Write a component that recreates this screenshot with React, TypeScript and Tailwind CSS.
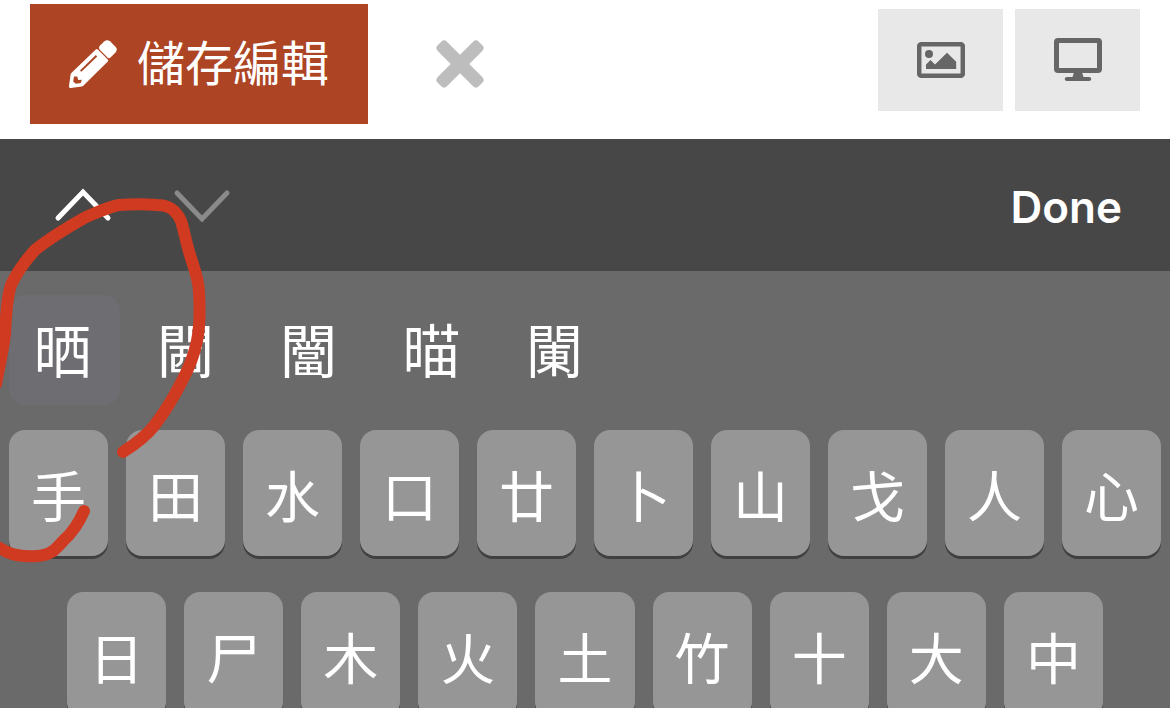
import { useState } from "react";

const candidates = ["晒", "閪", "闣", "𣈴", "䦨"];

const keyRows = [
  { id: "top", keys: ["手", "田", "水", "口", "廿", "卜", "山", "戈", "人", "心"], padding: "px-[9px]" },
  { id: "home", keys: ["日", "尸", "木", "火", "土", "竹", "十", "大", "中"], padding: "px-[67px]" },
];

function PencilIcon() {
  return (
    <svg viewBox="0 0 48 48" className="w-12 h-12 shrink-0" fill="#fff" aria-hidden="true">
      <path d="M31 5.500 35.500 1.300Q38-1 41 1.300L46.500 6.800Q49 9.500 46.500 12.500L41.500 17.500Q40 19 38.500 17.500L31 10Q29 8 31 5.500z" />
      <path
        fillRule="evenodd"
        d="M26.800 9.500q1-.8 2 0l10 10q.8 1 0 2L14.500 45.500q-.8.8-2 1L2 48q-2.200.2-2-2l1.600-11.500q.2-1 1-1.800zM26.800 15 11 30.400l1.400 1.400L28.200 16.400zM5 36.500 4.200 41.500 6.800 43.800l5-.8 1-3.300-3.600.2-1-3.400z"
      />
    </svg>
  );
}

function CloseIcon() {
  return (
    <svg viewBox="0 0 48 48" className="w-12 h-12" fill="#bdbdbd" aria-hidden="true">
      <rect x="-5" y="17.500" width="58" height="13" rx="4" transform="rotate(45 24 24)" />
      <rect x="-5" y="17.500" width="58" height="13" rx="4" transform="rotate(-45 24 24)" />
    </svg>
  );
}

function ImageIcon() {
  return (
    <svg viewBox="0 0 48 36" className="w-12 h-9" aria-hidden="true">
      <rect x="2.200" y="2.200" width="43.600" height="31.600" rx="2" fill="none" stroke="#666" strokeWidth="4.500" />
      <circle cx="12" cy="12" r="4" fill="#666" />
      <path d="M9 27V22.500l4.500-4.500L18 22.500 30 10.800l9.200 9V27z" fill="#666" />
    </svg>
  );
}

function MonitorIcon() {
  return (
    <svg viewBox="0 0 48 44" className="w-12 h-11" aria-hidden="true">
      <rect x="2.500" y="2.500" width="43" height="30" rx="1.500" fill="none" stroke="#666" strokeWidth="5" />
      <path d="M20 34.500h8l1.500 4.500H35q2.300 0 2.300 2T35 43H13q-2.300 0-2.300-2t2.300-2h5.500z" fill="#666" />
    </svg>
  );
}

// Hand drawn marker, lies over everything
function Annotation() {
  return (
    <svg
      viewBox="0 0 230 600"
      className="absolute top-0 left-0 w-[230px] h-[600px] pointer-events-none"
      fill="none"
      stroke="#d03a21"
      strokeWidth="12"
      strokeLinecap="round"
      strokeLinejoin="round"
      aria-hidden="true"
    >
      <path d="M-4 384C-1 366 3 352 5 334C6 312 8 294 11 285C18 270 26 260 35 250C50 238 70 226 86 217C98 212 108 207 119 205C132 204 145 204 157 205C169 205 176 210 181 221C184 230 186 242 190 255C194 268 199 280 199 292C200 308 200 326 197 341C194 356 189 368 182 381C174 397 164 413 154 426C147 435 134 445 123 452" />
      <path d="M84 511C78 525 71 534 63 541C56 549 51 555 38 556C26 557 16 556 7 552L-6 545" />
    </svg>
  );
}

export default function App() {
  const [selected, setSelected] = useState(0);

  return (
    <div className="relative h-screen flex flex-col overflow-hidden bg-white font-['Inter','Noto_Sans_CJK_TC',sans-serif]">
      {/* Editor actions */}
      <header className="flex items-start justify-between px-[30px] pt-1 pb-[15px]">
        <div className="flex items-center">
          <button className="flex items-center gap-5 h-[120px] px-[39px] bg-[#ad4424] text-white text-5xl whitespace-nowrap">
            <PencilIcon />
            <span>儲存編輯</span>
          </button>
          <button aria-label="Cancel" className="ml-[68px]">
            <CloseIcon />
          </button>
        </div>
        <div className="flex gap-3 pt-[5px]">
          <button aria-label="Image" className="w-[125px] h-[102px] flex items-center justify-center bg-[#e8e8e8]">
            <ImageIcon />
          </button>
          <button aria-label="Desktop preview" className="w-[125px] h-[102px] flex items-center justify-center bg-[#e8e8e8]">
            <MonitorIcon />
          </button>
        </div>
      </header>

      {/* Form toolbar */}
      <div className="flex items-center justify-between h-[132px] shrink-0 pl-[54px] pr-12 bg-[#474747]">
        <div className="flex gap-[61px]">
          <button aria-label="Previous field">
            <svg viewBox="0 0 58 36" className="w-[58px] h-9" fill="none" stroke="#fff" strokeWidth="5" strokeLinecap="round">
              <path d="M4 31 29 5 54 31" />
            </svg>
          </button>
          <button aria-label="Next field">
            <svg viewBox="0 0 58 36" className="w-[58px] h-9" fill="none" stroke="#8a8a8a" strokeWidth="5" strokeLinecap="round">
              <path d="M4 6 29 32 54 6" />
            </svg>
          </button>
        </div>
        <button className="pt-1 text-white text-[44px] leading-none font-semibold">Done</button>
      </div>

      {/* Keyboard */}
      <main className="flex-1 min-h-0 overflow-hidden bg-[#6a6a6a] text-white">
        <div className="flex gap-3 px-[9px] pt-6 pb-[25px]">
          {candidates.map((c, i) => (
            <button
              key={c}
              onClick={() => setSelected(i)}
              className={`w-[111px] h-[110px] pt-1 pr-1 flex items-center justify-center rounded-2xl text-[58px] leading-none ${
                i === selected ? "bg-[#6e6d72]" : ""
              }`}
            >
              {c}
            </button>
          ))}
        </div>

        <div className="flex flex-col gap-9">
          {keyRows.map((row) => (
            <div key={row.id} className={`flex gap-[18px] ${row.padding}`}>
              {row.keys.map((k) => (
                <button
                  key={k}
                  className="flex-1 h-[126px] pt-2 flex items-center justify-center rounded-2xl bg-[#969696] text-[55px] leading-none shadow-[0_3px_0_#404040]"
                >
                  {k}
                </button>
              ))}
            </div>
          ))}
        </div>
      </main>

      <Annotation />
    </div>
  );
}
